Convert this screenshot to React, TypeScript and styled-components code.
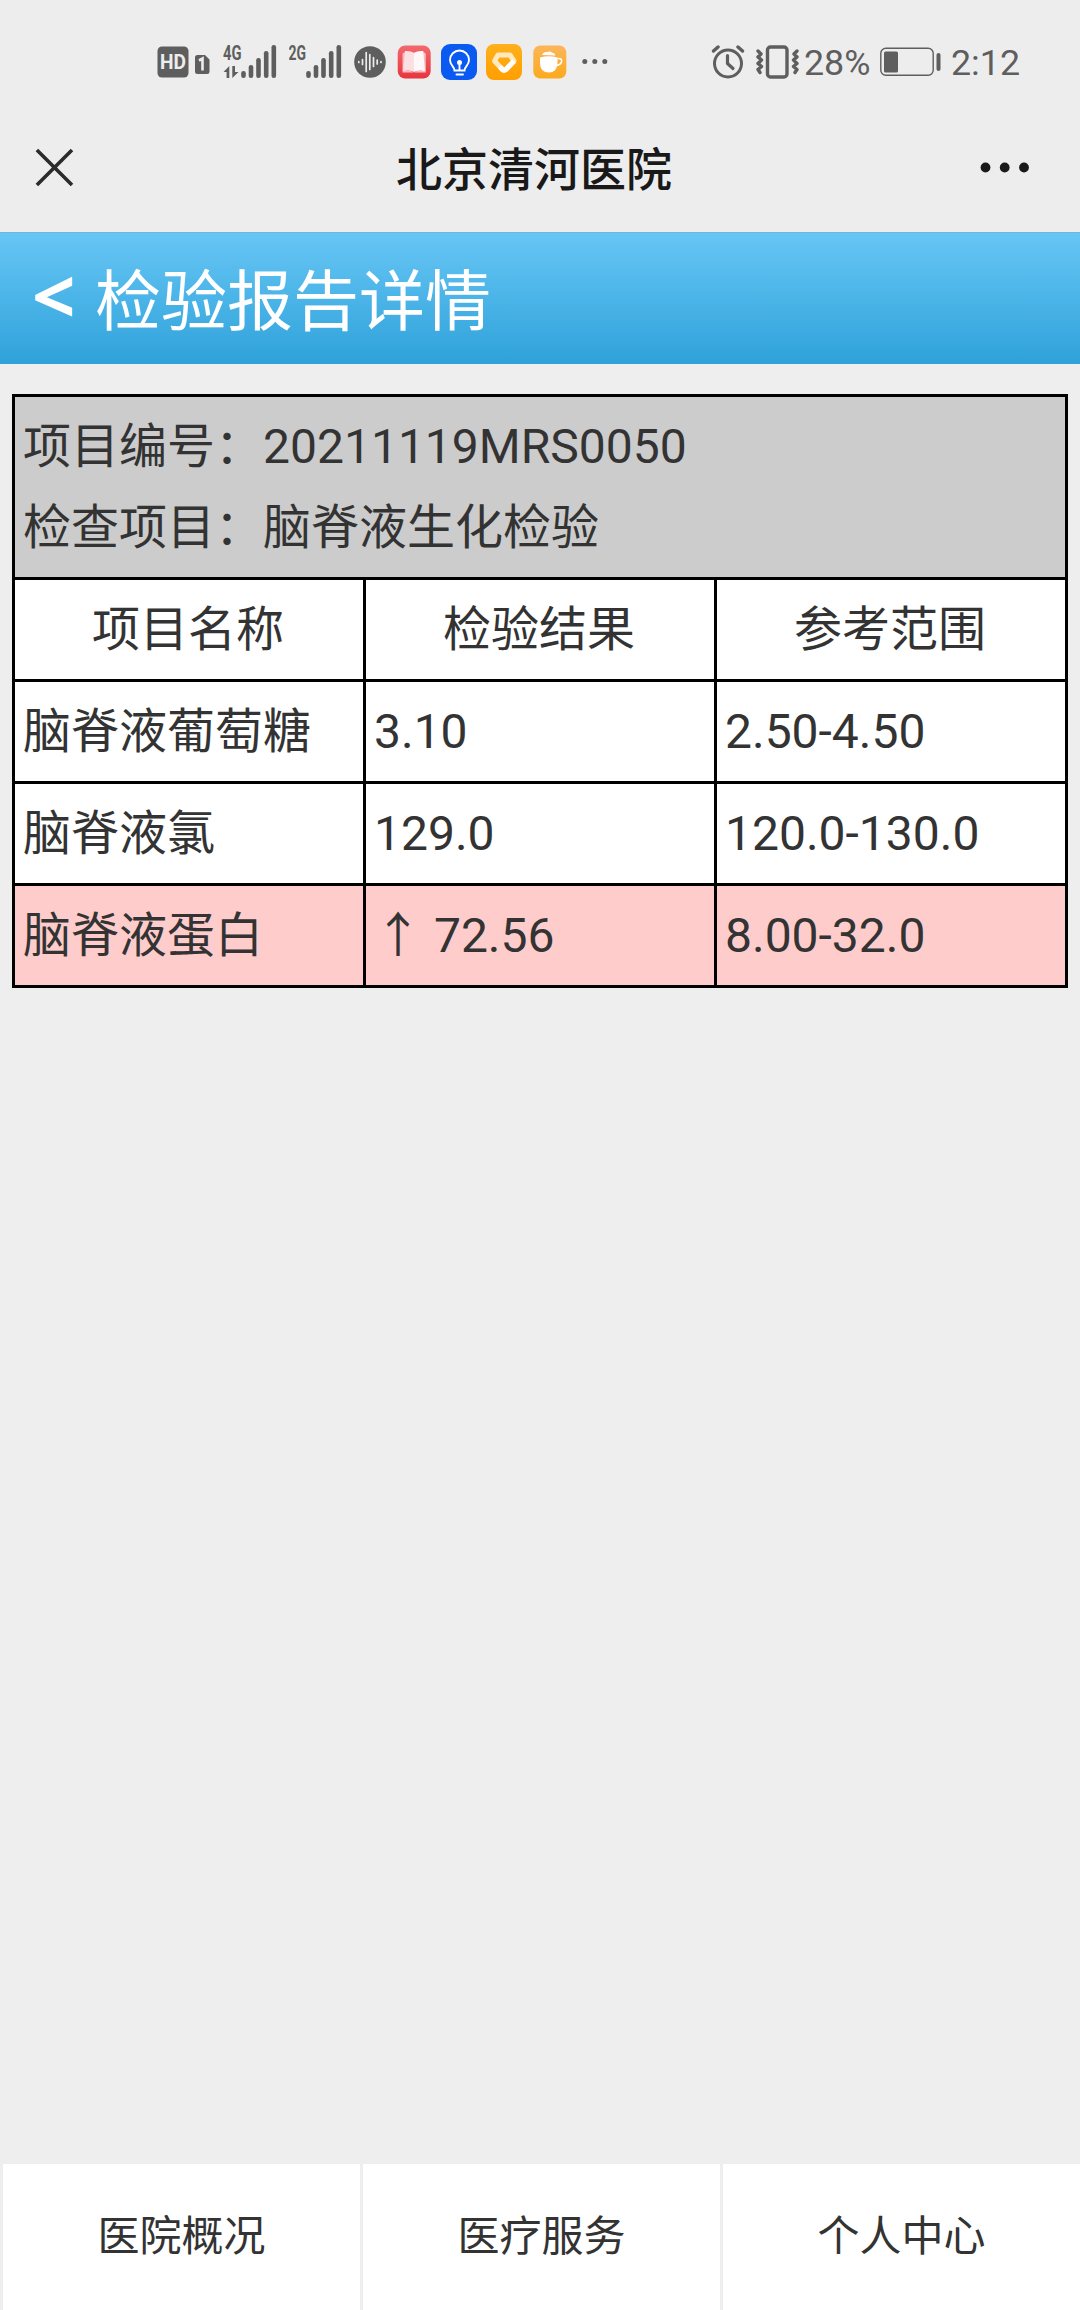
import React from 'react';
import styled, { createGlobalStyle } from 'styled-components';

const GlobalStyle = createGlobalStyle`
  html, body { margin: 0; padding: 0; background: #eeeeee; }
  * { box-sizing: border-box; }
  body { font-family: Roboto, "Noto Sans CJK SC", sans-serif; color: #333333; }
`;

const INK = '#5e5e5e';

const Page = styled.div`
  width: 1080px;
  height: 2310px;
  display: flex;
  flex-direction: column;
  overflow: hidden;
  background: #eeeeee;
`;

const StatusBar = styled.div`
  height: 104px;
  padding: 40px 60px 20px 157px;
  display: flex;
  align-items: center;
  justify-content: space-between;
  background: #ededed;
`;

const StatusGroup = styled.div`
  display: flex;
  align-items: center;
  height: 44px;
`;

const StatusIcon = styled.svg<{ $gap: number }>`
  display: block;
  flex: none;
  margin-left: ${(p) => p.$gap}px;
`;

const StatusText = styled.span<{ $width: number; $gap: number }>`
  flex: none;
  width: ${(p) => p.$width}px;
  margin-left: ${(p) => p.$gap}px;
  padding-top: 2px;
  font-size: 35.8px;
  line-height: 44px;
  color: ${INK};
  white-space: nowrap;
`;

const NavBar = styled.div`
  height: 128px;
  padding: 0 48px 0 34px;
  display: grid;
  grid-template-columns: 100px 1fr 100px;
  align-items: center;
  background: #ededed;
`;

const NavTitle = styled.div`
  padding: 4px 0 0 2px;
  text-align: center;
  font-size: 46px;
  line-height: 60px;
  font-weight: 500;
  color: #191919;
`;

const NavIcon = styled.svg<{ $end?: boolean }>`
  display: block;
  justify-self: ${(p) => (p.$end ? 'end' : 'start')};
`;

const PageHeader = styled.header`
  height: 132px;
  padding: 0 32px;
  display: flex;
  align-items: center;
  border-top: 1px solid #71b7da;
  background: linear-gradient(#67c6f5, #2fa2da);
  color: #ffffff;
`;

const BackMark = styled.span`
  width: 63px;
  padding-bottom: 8px;
  font-family: "Open Sans", "Noto Sans", sans-serif;
  font-size: 76px;
  line-height: 100px;
  font-weight: 700;
`;

const HeaderTitle = styled.h1`
  margin: 0;
  padding-top: 8px;
  font-size: 66px;
  line-height: 100px;
  font-weight: 400;
`;

const Content = styled.main`
  flex: 1;
  padding: 30px 12px 0;
`;

const ReportTable = styled.table`
  width: 1056px;
  table-layout: fixed;
  border-collapse: separate;
  border-spacing: 0;
  border-left: 3px solid #000;
  border-top: 3px solid #000;
  font-size: 48px;
`;

const SummaryCell = styled.td`
  height: 183px;
  padding: 8px 8px 9px;
  background: #cccccc;
  border-right: 3px solid #000;
  border-bottom: 3px solid #000;
`;

const SummaryLine = styled.div`
  line-height: 81px;
`;

const Row = styled.tr<{ $abnormal?: boolean }>`
  background: ${(p) => (p.$abnormal ? '#ffcccc' : '#ffffff')};
`;

const Cell = styled.td<{ $center?: boolean }>`
  height: 102px;
  padding: ${(p) => (p.$center ? '0 8px 0 6px' : '0 8px')};
  line-height: 72px;
  text-align: ${(p) => (p.$center ? 'center' : 'left')};
  white-space: pre;
  border-right: 3px solid #000;
  border-bottom: 3px solid #000;
`;

const TabBar = styled.nav`
  height: 146px;
  display: grid;
  grid-template-columns: repeat(3, 1fr);
`;

const Tab = styled.a`
  display: flex;
  align-items: center;
  justify-content: center;
  border-left: 3px solid #eeeeee;
  background: #ffffff;
  font-size: 42px;
  line-height: 60px;
`;

const Bars = ({ x }: { x: number }) => (
  <g fill={INK}>
    <rect x={x} y="26" width="4.6" height="7" rx="2.2" />
    <rect x={x + 7.5} y="20" width="4.6" height="13" rx="2.2" />
    <rect x={x + 15} y="13" width="4.6" height="20" rx="2.2" />
    <rect x={x + 22.7} y="6" width="4.6" height="27" rx="2.2" />
    <rect x={x + 30.3} y="0" width="4.6" height="33" rx="2.2" />
  </g>
);

const HdIcon = () => (
  <StatusIcon $gap={0} width="32" height="32" viewBox="0 0 32 32">
    <rect x="0.5" y="0.5" width="31" height="31" rx="4.5" fill={INK} />
    <text x="16" y="22.6" textAnchor="middle" textLength="26" lengthAdjust="spacingAndGlyphs" fontSize="20" fontWeight="700" fill="#ededed">HD</text>
  </StatusIcon>
);

const SimIcon = () => (
  <StatusIcon $gap={6} width="15" height="38" viewBox="0 -2 15 38">
    <path d="M2.500 10H10L14.500 14.500V26.500A2.500 2.500 0 0 1 12 29H2.500A2.500 2.500 0 0 1 0 26.500V12.500A2.500 2.500 0 0 1 2.500 10Z" fill={INK} />
    <path d="M4 15.500L7.500 13.500V25.500" fill="none" stroke="#ededed" strokeWidth="2.600" />
  </StatusIcon>
);

const Signal4g = () => (
  <StatusIcon $gap={13} width="54" height="50" viewBox="0 -8 54 50">
    <text x="0" y="14.500" textLength="18.500" lengthAdjust="spacingAndGlyphs" fontSize="20" fontWeight="700" fill={INK}>4G</text>
    <path d="M0.500 27L6.300 21V33H3.600V27Z M9.300 21H12V27H15.500L9.300 33Z" fill={INK} />
    <Bars x={18.2} />
  </StatusIcon>
);

const Signal2g = () => (
  <StatusIcon $gap={12} width="53" height="50" viewBox="0 -8 53 50">
    <text x="-0.5" y="14.500" textLength="17.500" lengthAdjust="spacingAndGlyphs" fontSize="20" fontWeight="700" fill={INK}>2G</text>
    <Bars x={17.2} />
  </StatusIcon>
);

const VoiceIcon = () => (
  <StatusIcon $gap={12} width="32" height="32" viewBox="0 0 32 32">
    <circle cx="16" cy="16" r="15.800" fill={INK} />
    <path d="M4.800 15.500V16.500M8.500 13.500V18.500M12.200 6.500V25.500M15.800 8.500V23.500M19.500 11.500V20.500M23.200 14V18M27 15.500V16.500" stroke="#ededed" strokeWidth="1.700" strokeLinecap="round" />
  </StatusIcon>
);

const BookIcon = () => (
  <StatusIcon $gap={11} width="34" height="34" viewBox="0 0 34 34">
    <defs>
      <linearGradient id="book" x1="0" y1="0" x2="0" y2="1">
        <stop offset="0" stopColor="#f26a6e" />
        <stop offset="1" stopColor="#e8353f" />
      </linearGradient>
    </defs>
    <rect x="0.700" y="0.500" width="33" height="33" rx="7.500" fill="url(#book)" />
    <path d="M5.500 8.500L8.500 6.500V25.500Q13.500 25 17 27.500H5.500Z M28.800 8.500L25.800 6.500V25.500Q20.500 25 17 27.500H28.800Z" fill="#f9b9bd" />
    <path d="M8 6Q13.500 5.500 17 7.800V27Q13 24.500 6 26Z" fill="#fbdfe2" />
    <path d="M26.200 6Q20.500 5.500 17 7.800V27Q21 24.500 28 26Z" fill="#fff7f8" />
  </StatusIcon>
);

const BulbIcon = () => (
  <StatusIcon $gap={10} width="36" height="36" viewBox="0 0 36 36">
    <rect width="36" height="36" rx="9" fill="#0a5af2" />
    <g fill="none" stroke="#fff" strokeWidth="1.900" strokeLinecap="round">
      <path d="M13.500 26.500C13.500 22.500 9 21.500 9 16A9.500 9.500 0 0 1 28 16C28 21.500 23.500 22.500 23.500 26.500Z" />
      <path d="M15.500 30.500H22M18.500 19V26" />
    </g>
    <circle cx="18.500" cy="18.500" r="2.500" fill="#fff" />
  </StatusIcon>
);

const GemIcon = () => (
  <StatusIcon $gap={9} width="36" height="36" viewBox="0 0 36 36">
    <defs>
      <linearGradient id="gem" x1="0" y1="0" x2="0" y2="1">
        <stop offset="0" stopColor="#ffb01c" />
        <stop offset="1" stopColor="#ff9f00" />
      </linearGradient>
    </defs>
    <rect width="36" height="36" rx="8" fill="url(#gem)" />
    <path d="M12 11H24L28 17L20 25.500Q18.300 27 16.500 25.500L8.500 17Z" fill="none" stroke="#ffe9bd" strokeWidth="5" strokeLinejoin="round" />
    <path d="M28 17L20 25.500Q18.300 27 16.500 25.500L14 22.800" fill="none" stroke="#ffffff" strokeWidth="5" strokeLinejoin="round" />
  </StatusIcon>
);

const CupIcon = () => (
  <StatusIcon $gap={11} width="34" height="34" viewBox="0 0 34 34">
    <defs>
      <linearGradient id="cup" x1="0" y1="0" x2="0" y2="1">
        <stop offset="0" stopColor="#fbb65a" />
        <stop offset="1" stopColor="#fbaa1d" />
      </linearGradient>
    </defs>
    <rect x="0.300" y="0.500" width="33" height="33" rx="7" fill="url(#cup)" />
    <path d="M9 10Q10.500 6.500 14 7.200Q17 5.500 19 7.500Q22 8 22.500 10.500Z" fill="#fff" />
    <path d="M7 12.500Q16 10 24.500 12.500V18Q24 27.500 16 27.500Q7 27.500 7 18Z" fill="#fff" />
    <path d="M24.500 13.500Q29.500 13 28.500 17Q27.500 20 23.500 20.500" fill="none" stroke="#fff" strokeWidth="1.600" />
  </StatusIcon>
);

const MoreDots = () => (
  <StatusIcon $gap={15} width="26" height="6" viewBox="0 0 26 6">
    <g fill={INK}>
      <circle cx="2.800" cy="2.500" r="2.500" />
      <circle cx="12.800" cy="2.500" r="2.500" />
      <circle cx="22.800" cy="2.500" r="2.500" />
    </g>
  </StatusIcon>
);

const AlarmIcon = () => (
  <StatusIcon $gap={0} width="34" height="34" viewBox="0 0 34 34">
    <g fill="none" stroke={INK} strokeLinecap="round" strokeLinejoin="round">
      <circle cx="17" cy="18.500" r="13.500" strokeWidth="3" />
      <path d="M16.500 10.500V18.500L22 23.500" strokeWidth="3.200" />
      <path d="M2.500 6L7 2M27 2L31.500 6" strokeWidth="3.400" />
    </g>
  </StatusIcon>
);

const VibrateIcon = () => (
  <StatusIcon $gap={11} width="43" height="34" viewBox="0 0 43 34">
    <g fill="none" stroke={INK} strokeWidth="3.4" strokeLinecap="round" strokeLinejoin="round">
      <rect x="11.500" y="2" width="19.500" height="30" rx="3" />
      <path d="M2 6L5 9L2 12L5.500 15L2 18.500L5.500 21.500L2 24.500L4 27.500" />
      <path d="M41 6L38 9L41 12L37.500 15L41 18.500L37.500 21.500L41 24.500L39 27.500" />
    </g>
  </StatusIcon>
);

const BatteryIcon = () => (
  <StatusIcon $gap={9} width="61" height="30" viewBox="0 0 61 30">
    <rect x="0.800" y="1.300" width="52.400" height="27" rx="5" fill="none" stroke={INK} strokeWidth="1.400" />
    <rect x="4" y="4.500" width="14" height="21" rx="1.500" fill={INK} />
    <rect x="56.500" y="6" width="4" height="18" rx="2" fill={INK} />
  </StatusIcon>
);

const results = [
  { name: '脑脊液葡萄糖', value: '3.10', range: '2.50-4.50' },
  { name: '脑脊液氯', value: '129.0', range: '120.0-130.0' },
  { name: '脑脊液蛋白', value: '↑ 72.56', range: '8.00-32.0', abnormal: true },
];

export default function App() {
  return (
    <Page>
      <GlobalStyle />
      <StatusBar>
        <StatusGroup>
          <HdIcon />
          <SimIcon />
          <Signal4g />
          <Signal2g />
          <VoiceIcon />
          <BookIcon />
          <BulbIcon />
          <GemIcon />
          <CupIcon />
          <MoreDots />
        </StatusGroup>
        <StatusGroup>
          <AlarmIcon />
          <VibrateIcon />
          <StatusText $gap={5} $width={67}>28%</StatusText>
          <BatteryIcon />
          <StatusText $gap={10} $width={69}>2:12</StatusText>
        </StatusGroup>
      </StatusBar>
      <NavBar>
        <NavIcon width="40" height="40" viewBox="0 1 40 40">
          <path d="M2.900 2.900L38 38M38 2.900L2.900 38" stroke="#2b2b2b" strokeWidth="3.600" />
        </NavIcon>
        <NavTitle>北京清河医院</NavTitle>
        <NavIcon $end width="52" height="12" viewBox="0 0 52 12">
          <circle cx="5.500" cy="5.500" r="4.900" fill="#191919" />
          <circle cx="24.700" cy="5.500" r="4.900" fill="#191919" />
          <circle cx="44" cy="5.500" r="4.900" fill="#191919" />
        </NavIcon>
      </NavBar>
      <PageHeader>
        <BackMark>&lt;</BackMark>
        <HeaderTitle>检验报告详情</HeaderTitle>
      </PageHeader>
      <Content>
        <ReportTable>
          <tbody>
            <tr>
              <SummaryCell colSpan={3}>
                <SummaryLine>项目编号：20211119MRS0050</SummaryLine>
                <SummaryLine>检查项目：脑脊液生化检验</SummaryLine>
              </SummaryCell>
            </tr>
            <Row>
              <Cell $center>项目名称</Cell>
              <Cell $center>检验结果</Cell>
              <Cell $center>参考范围</Cell>
            </Row>
            {results.map((r) => (
              <Row key={r.name} $abnormal={r.abnormal}>
                <Cell>{r.name}</Cell>
                <Cell>{r.value}</Cell>
                <Cell>{r.range}</Cell>
              </Row>
            ))}
          </tbody>
        </ReportTable>
      </Content>
      <TabBar>
        <Tab>医院概况</Tab>
        <Tab>医疗服务</Tab>
        <Tab>个人中心</Tab>
      </TabBar>
    </Page>
  );
}
